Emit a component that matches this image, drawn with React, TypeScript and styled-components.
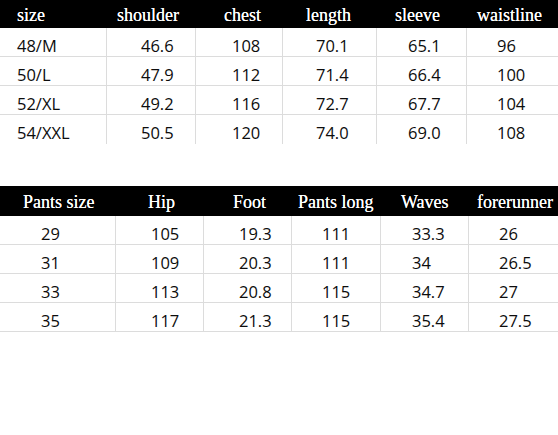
import React from "react";
import styled, { createGlobalStyle } from "styled-components";

const Global = createGlobalStyle`
  html, body { margin: 0; padding: 0; background: #fff; }
  body { width: 558px; height: 435px; overflow: hidden; }
`;

const Page = styled.div`
  width: 558px;
  height: 435px;
  background: #fff;
  display: flex;
  flex-direction: column;
`;

const Table = styled.div<{ $cols: string; $mt: number }>`
  display: grid;
  grid-template-columns: ${(p) => p.$cols};
  margin-top: ${(p) => p.$mt}px;
`;

const HeadCell = styled.div<{ $pad: number; $h: number }>`
  height: ${(p) => p.$h}px;
  background: #000;
  color: #fff;
  font-family: "Liberation Serif", "Times New Roman", serif;
  font-size: 18px;
  line-height: ${(p) => p.$h}px;
  padding-left: ${(p) => p.$pad}px;
  padding-top: 1px;
  box-sizing: border-box;
  white-space: nowrap;
  text-shadow: 0 0 0.5px #fff;
`;

const BodyCell = styled.div<{ $pad: number; $first: boolean; $line: boolean }>`
  height: 29px;
  box-sizing: border-box;
  padding-left: ${(p) => p.$pad}px;
  padding-top: 5px;
  font-family: "Open Sans", "Noto Sans", sans-serif;
  font-size: 16.5px;
  line-height: 26px;
  color: #0d0d0d;
  white-space: nowrap;
  border-left: ${(p) => (p.$first ? "none" : "1px solid #dcdcdc")};
  border-bottom: ${(p) => (p.$line ? "1px solid #dcdcdc" : "none")};
`;

type Spec = {
  cols: string;
  mt: number;
  headH: number;
  headPad: number[];
  bodyPad: number[];
  head: string[];
  rows: string[][];
  lastLine: boolean;
};

const top: Spec = {
  cols: "106px 89px 87px 94px 90px 92px",
  mt: 0,
  headH: 28,
  headPad: [17, 11, 29, 24, 19, 11],
  bodyPad: [17, 34, 36, 33, 31, 30],
  head: ["size", "shoulder", "chest", "length", "sleeve", "waistline"],
  rows: [
    ["48/M", "46.6", "108", "70.1", "65.1", "96"],
    ["50/L", "47.9", "112", "71.4", "66.4", "100"],
    ["52/XL", "49.2", "116", "72.7", "67.7", "104"],
    ["54/XXL", "50.5", "120", "74.0", "69.0", "108"],
  ],
  lastLine: false,
};

const bottom: Spec = {
  cols: "115px 88px 88px 89px 88px 90px",
  mt: 42,
  headH: 30,
  headPad: [23, 33, 30, 7, 21, 9],
  bodyPad: [41, 35, 35, 30, 31, 30],
  head: ["Pants size", "Hip", "Foot", "Pants long", "Waves", "forerunner"],
  rows: [
    ["29", "105", "19.3", "111", "33.3", "26"],
    ["31", "109", "20.3", "111", "34", "26.5"],
    ["33", "113", "20.8", "115", "34.7", "27"],
    ["35", "117", "21.3", "115", "35.4", "27.5"],
  ],
  lastLine: true,
};

function SizeTable({ spec }: { spec: Spec }) {
  return (
    <Table $cols={spec.cols} $mt={spec.mt}>
      {spec.head.map((h, i) => (
        <HeadCell key={"h" + i} $pad={spec.headPad[i]} $h={spec.headH}>
          {h}
        </HeadCell>
      ))}
      {spec.rows.map((r, ri) =>
        r.map((c, ci) => (
          <BodyCell
            key={ri + "-" + ci}
            $pad={spec.bodyPad[ci]}
            $first={ci === 0}
            $line={ri < spec.rows.length - 1 || spec.lastLine}
          >
            {c}
          </BodyCell>
        ))
      )}
    </Table>
  );
}

export default function App() {
  return (
    <Page>
      <Global />
      <SizeTable spec={top} />
      <SizeTable spec={bottom} />
    </Page>
  );
}
